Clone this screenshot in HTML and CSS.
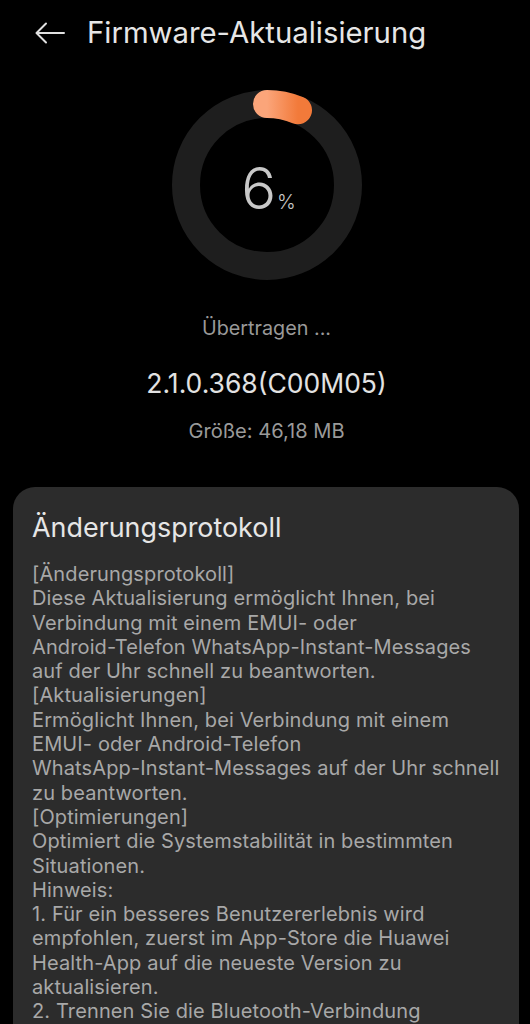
FILE: index.html
```html
<!DOCTYPE html>
<html lang="de">
<head>
<meta charset="UTF-8">
<meta name="viewport" content="width=device-width, initial-scale=1.0">
<title>Firmware-Aktualisierung</title>
<link rel="stylesheet" href="styles.css">
</head>
<body>
<div class="page">
    <div class="header">
        <svg class="back" width="30" height="22" viewBox="0 0 30 22">
            <path d="M29 11 H2 M11 1.5 L1.5 11 L11 20.5" fill="none" stroke="#e0e0e0" stroke-width="2" stroke-linecap="round" stroke-linejoin="round"/>
        </svg>
        <h1>Firmware-Aktualisierung</h1>
    </div>

    <div class="progress">
        <svg class="ring" width="190" height="190" viewBox="0 0 190 190">
            <defs>
                <linearGradient id="arc" x1="0" y1="0" x2="1" y2="0">
                    <stop offset="0" stop-color="#fba57a"/>
                    <stop offset="1" stop-color="#f27a3a"/>
                </linearGradient>
            </defs>
            <circle cx="95" cy="95" r="81" fill="none" stroke="#1e1e1e" stroke-width="28"/>
            <path d="M95 14 A81 81 0 0 1 126 20.2" fill="none" stroke="url(#arc)" stroke-width="28" stroke-linecap="round"/>
        </svg>
        <div class="percent">
            <div><span class="num">6</span><span class="unit">%</span></div>
        </div>
    </div>

    <div class="status">Übertragen ...</div>
    <div class="version">2.1.0.368(C00M05)</div>
    <div class="size">Größe: 46,18 MB</div>

    <div class="card">
        <h2>Änderungsprotokoll</h2>
        <p class="log">
            [Änderungsprotokoll]<br>
            Diese Aktualisierung ermöglicht Ihnen, bei<br>
            Verbindung mit einem EMUI- oder<br>
            Android-Telefon WhatsApp-Instant-Messages<br>
            auf der Uhr schnell zu beantworten.<br>
            [Aktualisierungen]<br>
            Ermöglicht Ihnen, bei Verbindung mit einem<br>
            EMUI- oder Android-Telefon<br>
            WhatsApp-Instant-Messages auf der Uhr schnell<br>
            zu beantworten.<br>
            [Optimierungen]<br>
            Optimiert die Systemstabilität in bestimmten<br>
            Situationen.<br>
            Hinweis:<br>
            1. Für ein besseres Benutzererlebnis wird<br>
            empfohlen, zuerst im App-Store die Huawei<br>
            Health-App auf die neueste Version zu<br>
            aktualisieren.<br>
            2. Trennen Sie die Bluetooth-Verbindung
        </p>
    </div>
</div>
</body>
</html>
```

FILE: styles.css
```css
body {
    margin: 0;
    background: #000;
    font-family: Inter, "Noto Sans", sans-serif;
    color: #ddd;
}

.page {
    display: flex;
    flex-direction: column;
    align-items: center;
    height: 1024px;
    padding-left: 3px;
    overflow: hidden;
}

.page > * {
    flex-shrink: 0;
}

.header {
    align-self: stretch;
    display: flex;
    align-items: center;
    height: 64px;
    padding-left: 32px;
}

.header .back {
    margin-right: 22px;
    margin-top: 2px;
}

.header h1 {
    margin: 0;
    font-size: 29.3px;
    font-weight: 400;
    color: #e6e6e6;
}

.progress {
    position: relative;
    margin-top: 26px;
}

.ring {
    display: block;
}

/* the percentage sits over the ring */
.percent {
    position: absolute;
    inset: 0;
    display: flex;
    justify-content: center;
    align-items: center;
    padding-top: 6px;
    padding-left: 4px;
    color: #c8c8c8;
    font-weight: 300;
}

.percent .num {
    font-size: 58px;
}

.percent .unit {
    font-size: 20px;
    margin-left: 1px;
}

.status {
    margin-top: 36px;
    font-size: 19.8px;
    color: #999;
}

.version {
    margin-top: 27px;
    font-size: 26.5px;
    color: #e2e2e2;
}

.size {
    margin-top: 20px;
    font-size: 20.1px;
    color: #9a9a9a;
}

.card {
    align-self: stretch;
    margin: 44px 11px 0 10px;
    padding: 24px 19px;
    background: #2c2c2c;
    border-radius: 22px;
}

.card h2 {
    margin: 0;
    font-size: 26.9px;
    font-weight: 400;
    color: #e6e6e6;
}

.log {
    margin: 19px 0 0;
    font-size: 20px;
    line-height: 24.3px;
    letter-spacing: 0.12px;
    color: #a8a8a8;
    white-space: nowrap;
}
```
